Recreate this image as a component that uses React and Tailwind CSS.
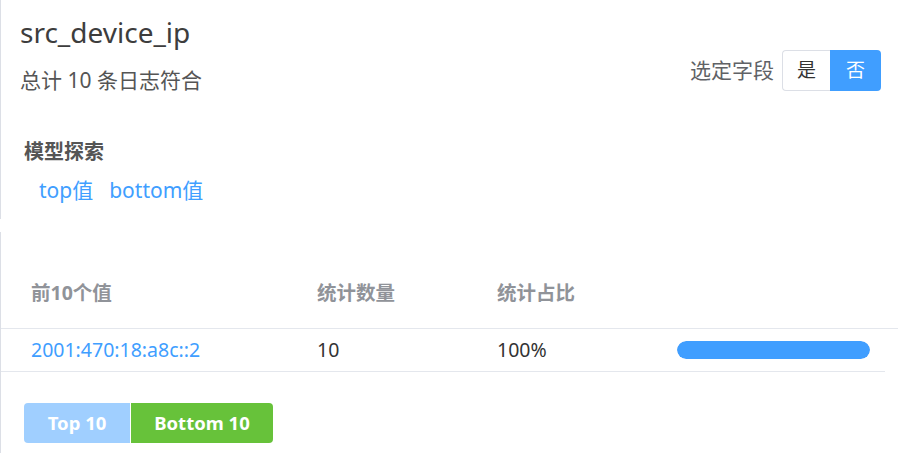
import { useState } from 'react';

const rows = [{ value: '2001:470:18:a8c::2', count: 10, pct: 100 }];

// field detail panel: summary header plus top/bottom value table
export default function App() {
  const [selected, setSelected] = useState(false);
  const [mode, setMode] = useState('bottom');

  return (
    <div
      className="w-[898px] h-[453px] bg-white overflow-hidden text-[#606266]"
      style={{ fontFamily: '"Noto Sans", "Noto Sans CJK SC", sans-serif' }}
    >
      {/* summary card */}
      <div className="h-[219px] border-l border-[#dcdfe6] pl-[19px] pr-[17px] pt-[14px]">
        <div className="flex justify-between">
          <div>
            <h1 className="text-[28px] leading-[36px] text-[#3d3d3d]">src_device_ip</h1>
            <p className="mt-[16px] text-[21px] leading-[28px] text-[#555]">总计 10 条日志符合</p>
          </div>
          <div className="flex items-center mt-[36px] h-[41px]">
            <span className="text-[21px] text-[#606266] mr-[8px]">选定字段</span>
            <div className="flex h-[41px] text-[19px]">
              <button
                onClick={() => setSelected(true)}
                className={
                  selected
                    ? 'w-[48px] rounded-l-[4px] bg-[#409eff] text-white'
                    : 'w-[48px] rounded-l-[4px] border border-r-0 border-[#dcdfe6] text-[#333]'
                }
              >
                是
              </button>
              <button
                onClick={() => setSelected(false)}
                className={
                  selected
                    ? 'w-[51px] rounded-r-[4px] border border-l-0 border-[#dcdfe6] text-[#333]'
                    : 'w-[51px] rounded-r-[4px] bg-[#409eff] text-white'
                }
              >
                否
              </button>
            </div>
          </div>
        </div>
        <div className="mt-[44px] pl-[4px]">
          <h3 className="text-[20px] leading-[28px] font-bold text-[#555]">模型探索</h3>
          <div className="mt-[10px] pl-[15px] flex gap-[16px] text-[21px] leading-[28px] text-[#409eff]">
            <a className="cursor-pointer">top值</a>
            <a className="cursor-pointer">bottom值</a>
          </div>
        </div>
      </div>

      {/* values table */}
      <div className="mt-[13px] h-[221px] border-l border-[#dcdfe6] pt-[25px]">
        <div className="flex items-center h-[72px] border-b border-[#e4e7ed] pl-[30px] text-[19.5px] font-bold text-[#909399]">
          <div className="w-[286px]">前10个值</div>
          <div className="w-[180px]">统计数量</div>
          <div className="w-[180px]">统计占比</div>
        </div>
        {rows.map((r) => (
          <div
            key={r.value}
            className="flex items-center h-[43px] mr-[13px] border-b border-[#e4e7ed] pl-[30px] text-[19.5px] text-[#333]"
          >
            <div className="w-[286px] text-[#409eff]">{r.value}</div>
            <div className="w-[180px]">{r.count}</div>
            <div className="w-[180px]">{r.pct}%</div>
            <div className="w-[193px] h-[18px] rounded-full bg-[#ebeef5] overflow-hidden">
              <div className="h-full rounded-full bg-[#409eff]" style={{ width: `${r.pct}%` }} />
            </div>
          </div>
        ))}
        <div className="flex mt-[31px] ml-[23px] h-[40px] text-[18.5px] font-bold text-white">
          <button
            onClick={() => setMode('top')}
            className={
              mode === 'top'
                ? 'w-[107px] rounded-l-[4px] bg-[#67c23a] border-r border-white'
                : 'w-[107px] rounded-l-[4px] bg-[#a0cfff] border-r border-white'
            }
          >
            Top 10
          </button>
          <button
            onClick={() => setMode('bottom')}
            className={
              mode === 'bottom'
                ? 'w-[142px] rounded-r-[4px] bg-[#67c23a]'
                : 'w-[142px] rounded-r-[4px] bg-[#a0cfff]'
            }
          >
            Bottom 10
          </button>
        </div>
      </div>
    </div>
  );
}
